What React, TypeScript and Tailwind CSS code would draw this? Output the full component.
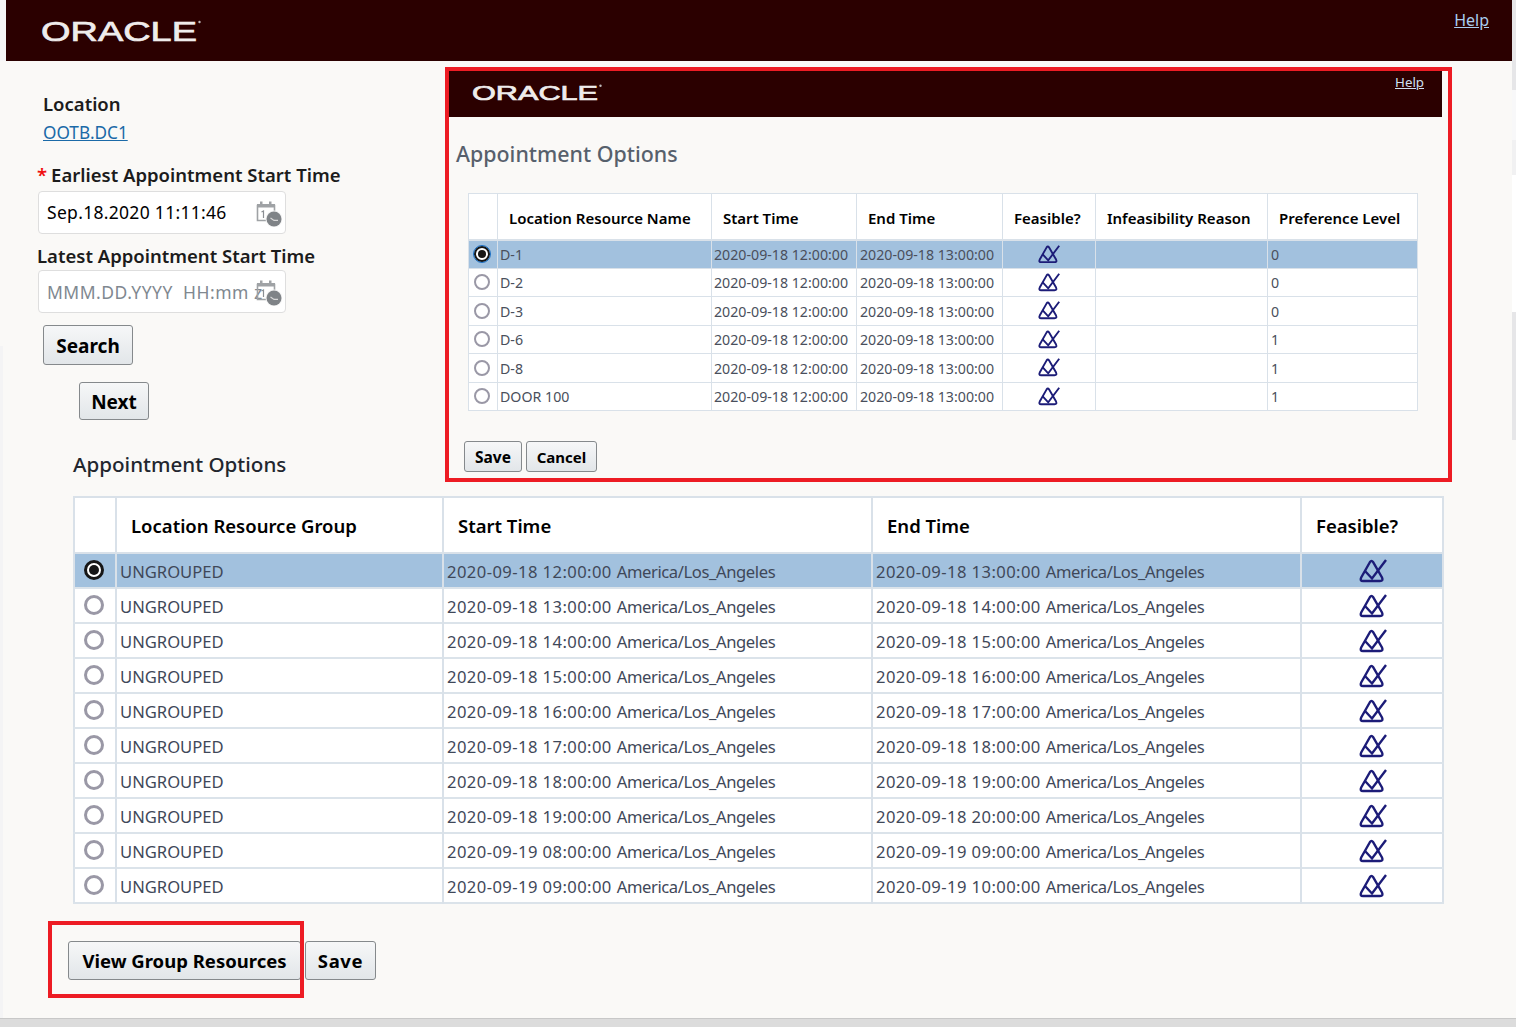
import React from 'react';

const font = "font-['Noto_Sans','Open_Sans',sans-serif]";

const OracleLogo: React.FC<{ w: number; h: number; size: number; base: number }> = ({ w, h, size, base }) => (
  <svg width={w} height={h} viewBox={`0 0 ${w} ${h}`} className="block">
    <text
      x="0"
      y={base}
      textLength={w - 4}
      lengthAdjust="spacingAndGlyphs"
      fontFamily="Liberation Sans, sans-serif"
      fontSize={size}
      fill="#efecec"
      stroke="#efecec"
      strokeWidth="0.7"
    >
      ORACLE
    </text>
    <circle cx={w - 1.5} cy={base - size * 0.68} r="1.2" fill="#bdb7b7" />
  </svg>
);

const FeasibleIcon: React.FC<{ w: number }> = ({ w }) => (
  <svg width={w} height={(w * 24) / 28} viewBox="0 0 28 24" fill="none" className="block">
    <path
      d="M11 3 L2.2 18.5 Q0.6 22 4 22 L21 22 Q24.6 22 23 18.5 L14 3 Q12.5 0.8 11 3 Z"
      stroke="#1c1c78"
      strokeWidth="2.4"
    />
    <path d="M6 12 L13 19.5 L27 1" stroke="#1c1c78" strokeWidth="2.4" />
  </svg>
);

const CalendarIcon: React.FC = () => (
  <svg width="26" height="26" viewBox="0 0 26 26" className="block">
    <path d="M1.5 4.5h17v15h-17z" fill="none" stroke="#9fa2a5" strokeWidth="1.6" />
    <rect x="1" y="3" width="18" height="3.5" fill="#9fa2a5" />
    <rect x="4" y="0.5" width="2.5" height="4" fill="#9fa2a5" />
    <rect x="13" y="0.5" width="2.5" height="4" fill="#9fa2a5" />
    <path d="M5.5 11l2-1v7" fill="none" stroke="#8b8f93" strokeWidth="1.2" />
    <circle cx="18" cy="18" r="8.5" fill="#f4f4f4" />
    <circle cx="18" cy="18" r="7.5" fill="#7f8387" />
    <path d="M14.5 17l3.5 2.4h4" fill="none" stroke="#d8d8d8" strokeWidth="1.2" />
  </svg>
);

const Radio: React.FC<{ on: boolean; size: 'lg' | 'sm' }> = ({ on, size }) => {
  if (size === 'lg') {
    return on ? (
      <span className="block w-[20px] h-[20px] rounded-full border-[3px] border-[#161616] bg-white p-[2px]">
        <span className="block w-full h-full rounded-full bg-[#161616]" />
      </span>
    ) : (
      <span className="block w-[20px] h-[20px] rounded-full border-[3px] border-[#9a98a6] bg-white" />
    );
  }
  return on ? (
    <span className="block w-[16px] h-[16px] outline-1 outline-[#1a6fc4] rounded-full border-[2.5px] border-[#161616] bg-white p-[2px]">
      <span className="block w-full h-full rounded-full bg-[#161616]" />
    </span>
  ) : (
    <span className="block w-[16px] h-[16px] rounded-full border-[2.5px] border-[#9a98a6] bg-white" />
  );
};

const Btn: React.FC<{ label: string; className: string }> = ({ label, className }) => (
  <button className={`block rounded-[3px] border border-[#85898c] bg-gradient-to-b from-[#f6f7f8] to-[#e2e6e9] font-bold text-black ${className}`}>
    {label}
  </button>
);

const DateZone: React.FC<{ value: string }> = ({ value }) => (
  <>
    <span className="tracking-[0.42px]">{value}</span>
    <span className="ml-[1px] tracking-[-0.4px]"> America/Los_Angeles</span>
  </>
);

const groupRows = [
  ['2020-09-18 12:00:00', '2020-09-18 13:00:00'],
  ['2020-09-18 13:00:00', '2020-09-18 14:00:00'],
  ['2020-09-18 14:00:00', '2020-09-18 15:00:00'],
  ['2020-09-18 15:00:00', '2020-09-18 16:00:00'],
  ['2020-09-18 16:00:00', '2020-09-18 17:00:00'],
  ['2020-09-18 17:00:00', '2020-09-18 18:00:00'],
  ['2020-09-18 18:00:00', '2020-09-18 19:00:00'],
  ['2020-09-18 19:00:00', '2020-09-18 20:00:00'],
  ['2020-09-19 08:00:00', '2020-09-19 09:00:00'],
  ['2020-09-19 09:00:00', '2020-09-19 10:00:00'],
];

const resourceRows = [
  ['D-1', '0'],
  ['D-2', '0'],
  ['D-3', '0'],
  ['D-6', '1'],
  ['D-8', '1'],
  ['DOOR 100', '1'],
];

const thBig = 'border-r-2 border-[#d9e1e9] text-left align-middle pl-[14px] pt-[2px] font-semibold text-[18.5px] text-black';
const tdBig = 'border-r-2 border-[#d9e1e9] pl-[3px] pt-[3px] text-[16.6px] text-[#3f4859] whitespace-nowrap';
const thSmall = 'border-r border-[#d9e1e9] text-left align-middle pl-[11px] pt-[3px] font-semibold text-[15px] text-black whitespace-nowrap';
const tdSmall = 'border-r border-[#d9e1e9] pl-[2px] pt-[1px] text-[14.2px] text-[#4a4f5c] whitespace-nowrap';
const tdSmallWide = 'border-r border-[#d9e1e9] pl-[3px] pt-[1px] text-[14.2px] text-[#4a4f5c] whitespace-nowrap';

const GroupTable: React.FC = () => (
  <table className="ml-[67px] mt-[15px] w-[1369px] table-fixed border-collapse bg-white border-2 border-[#d9e1e9]">
    <colgroup>
      <col className="w-[42px]" />
      <col className="w-[327px]" />
      <col className="w-[429px]" />
      <col className="w-[429px]" />
      <col className="w-[142px]" />
    </colgroup>
    <thead>
      <tr className="h-[56px] border-b-2 border-[#d9e1e9]">
        <th className="border-r-2 border-[#d9e1e9]" />
        <th className={thBig}>Location Resource Group</th>
        <th className={thBig}>Start Time</th>
        <th className={thBig}>End Time</th>
        <th className={thBig}>Feasible?</th>
      </tr>
    </thead>
    <tbody>
      {groupRows.map((r, i) => (
        <tr key={i} className={`h-[35px] border-b-2 border-[#dbe3ea] ${i === 0 ? 'bg-[#a2c1de]' : ''}`}>
          <td className="border-r-2 border-[#d9e1e9]">
            <div className="flex justify-center pr-[3px] -mt-[2px]">
              <Radio on={i === 0} size="lg" />
            </div>
          </td>
          <td className={tdBig}>UNGROUPED</td>
          <td className={tdBig}><DateZone value={r[0]} /></td>
          <td className={tdBig}><DateZone value={r[1]} /></td>
          <td>
            <div className="flex justify-center pl-[1px]">
              <FeasibleIcon w={28} />
            </div>
          </td>
        </tr>
      ))}
    </tbody>
  </table>
);

const ResourceTable: React.FC = () => (
  <table className="ml-[19px] mt-[23px] w-[949px] table-fixed border-collapse bg-white border border-[#d9e1e9]">
    <colgroup>
      <col className="w-[29px]" />
      <col className="w-[214px]" />
      <col className="w-[145px]" />
      <col className="w-[146px]" />
      <col className="w-[93px]" />
      <col className="w-[172px]" />
      <col className="w-[150px]" />
    </colgroup>
    <thead>
      <tr className="h-[46px] border-b-2 border-[#d9e1e9]">
        <th className="border-r border-[#d9e1e9]" />
        <th className={thSmall}>Location Resource Name</th>
        <th className={thSmall}>Start Time</th>
        <th className={thSmall}>End Time</th>
        <th className={thSmall}>Feasible?</th>
        <th className={thSmall}>Infeasibility Reason</th>
        <th className={thSmall}>Preference Level</th>
      </tr>
    </thead>
    <tbody>
      {resourceRows.map((r, i) => (
        <tr key={i} className={`h-[28.5px] border-b border-[#d9e1e9] ${i === 0 ? 'bg-[#a2c1de]' : ''}`}>
          <td className="border-r border-[#d9e1e9]">
            <div className="flex justify-center pr-[2px]">
              <Radio on={i === 0} size="sm" />
            </div>
          </td>
          <td className={tdSmall}>{r[0]}</td>
          <td className={tdSmall}>2020-09-18 12:00:00</td>
          <td className={tdSmallWide}>2020-09-18 13:00:00</td>
          <td className="border-r border-[#d9e1e9]">
            <div className="flex justify-center">
              <FeasibleIcon w={22} />
            </div>
          </td>
          <td className="border-r border-[#d9e1e9]" />
          <td className={tdSmallWide}>{r[1]}</td>
        </tr>
      ))}
    </tbody>
  </table>
);

export default function App() {
  return (
    <div className={`relative w-[1516px] h-[1027px] overflow-hidden bg-[#faf9f7] flex flex-col ${font}`}>
      <div className="flex-1 flex min-h-0">
        <div className="w-[6px] flex flex-col">
          <div className="h-[61px] bg-[#f6f6f7]" />
          <div className="h-[285px]" />
          <div className="flex-1 w-[3px] bg-[#f4f4f5]" />
        </div>
        <div className="flex-1 min-w-0">
          <header className="h-[61px] bg-[#2b0000] flex justify-between">
            <div className="ml-[35px] mt-[15px]">
              <OracleLogo w={160} h={34} size={28} base={26} />
            </div>
            <a className="mr-[23px] mt-[8px] text-[16px] text-[#a9cdf0] underline">Help</a>
          </header>

          <div className="pt-[29px]">
            <div className="ml-[37px] text-[18.5px] leading-[28px] font-semibold text-[#1c1c1c]">Location</div>
            <a className="block ml-[37px] mt-[1px] text-[17.2px] leading-[28px] text-[#1b6aa8] underline">OOTB.DC1</a>
            <div className="ml-[31px] mt-[14px] text-[18.5px] leading-[28px] font-semibold text-[#1c1c1c]">
              <span className="text-[#f01010] mr-[4px]">*</span>Earliest Appointment Start Time
            </div>
            <div className="ml-[32px] mt-[2px] w-[248px] h-[43px] bg-white border border-[#dedede] rounded-[4px] flex items-center justify-between pl-[8px] pr-[3px] overflow-hidden">
              <span className="text-[17.5px] tracking-[0.3px] text-black whitespace-nowrap">Sep.18.2020 11:11:46</span>
              <span className="mt-[2px]"><CalendarIcon /></span>
            </div>
            <div className="ml-[31px] mt-[8px] text-[18.5px] leading-[28px] font-semibold text-[#1c1c1c]">Latest Appointment Start Time</div>
            <div className="ml-[32px] w-[248px] h-[43px] bg-white border border-[#dedede] rounded-[4px] relative flex items-center pl-[8px] pt-[1px] overflow-hidden">
              <span className="text-[17.5px] tracking-[0.5px] text-[#808890] whitespace-nowrap">MMM.DD.YYYY&nbsp; HH:mm z</span>
              <span className="absolute right-[3px] top-[9px]"><CalendarIcon /></span>
            </div>
            <Btn label="Search" className="ml-[37px] mt-[12px] w-[90px] h-[40px] text-[19px] pt-[2px]" />
            <Btn label="Next" className="ml-[73px] mt-[17px] w-[70px] h-[38px] text-[19px] pt-[2px]" />
            <h2 className="ml-[67px] mt-[27px] text-[20.6px] leading-[34px] font-medium text-[#22262e]">Appointment Options</h2>
            <GroupTable />
            <div className="ml-[62px] mt-[37px] flex gap-[4px]">
              <Btn label="View Group Resources" className="w-[233px] h-[39px] text-[18.5px] pt-[1px]" />
              <Btn label="Save" className="w-[71px] h-[39px] text-[18.5px] tracking-[0.6px] pt-[1px]" />
            </div>
          </div>
        </div>
        <div className="w-[4px] flex flex-col">
          <div className="h-[90px] bg-[#e6e6e8]" />
          <div className="h-[50px] bg-[#f8f8f9]" />
          <div className="h-[35px] bg-[#f1f1f2]" />
          <div className="h-[137px] bg-white" />
          <div className="h-[128px] bg-[#e6e6e8]" />
        </div>
      </div>
      <div className="h-[9px] bg-[#dcdcdc] border-t border-[#c8c8c8]" />

      {/* red call-out boxes pasted over the page */}
      <section className="absolute left-[445px] top-[67px] w-[1007px] h-[415px] border-4 border-[#ed1c24] bg-[#faf9f7]">
        <div className="h-[46px] w-[993px] bg-[#2b0000] flex justify-between">
          <div className="ml-[23px] mt-[7px]">
            <OracleLogo w={130} h={28} size={21} base={22} />
          </div>
          <a className="mr-[18px] mt-[2px] text-[13.3px] text-[#cfe0f2] underline">Help</a>
        </div>
        <h2 className="ml-[7px] mt-[21px] text-[21.4px] leading-[32px] font-medium text-[#57606c]">Appointment Options</h2>
        <ResourceTable />
        <div className="ml-[15px] mt-[30px] flex gap-[4px]">
          <Btn label="Save" className="w-[58px] h-[31px] text-[15.5px] pt-[2px]" />
          <Btn label="Cancel" className="w-[71px] h-[31px] text-[15px] pt-[1px]" />
        </div>
      </section>
      <div className="absolute left-[48px] top-[921px] w-[256px] h-[77px] border-4 border-[#ed1c24]" />
    </div>
  );
}
